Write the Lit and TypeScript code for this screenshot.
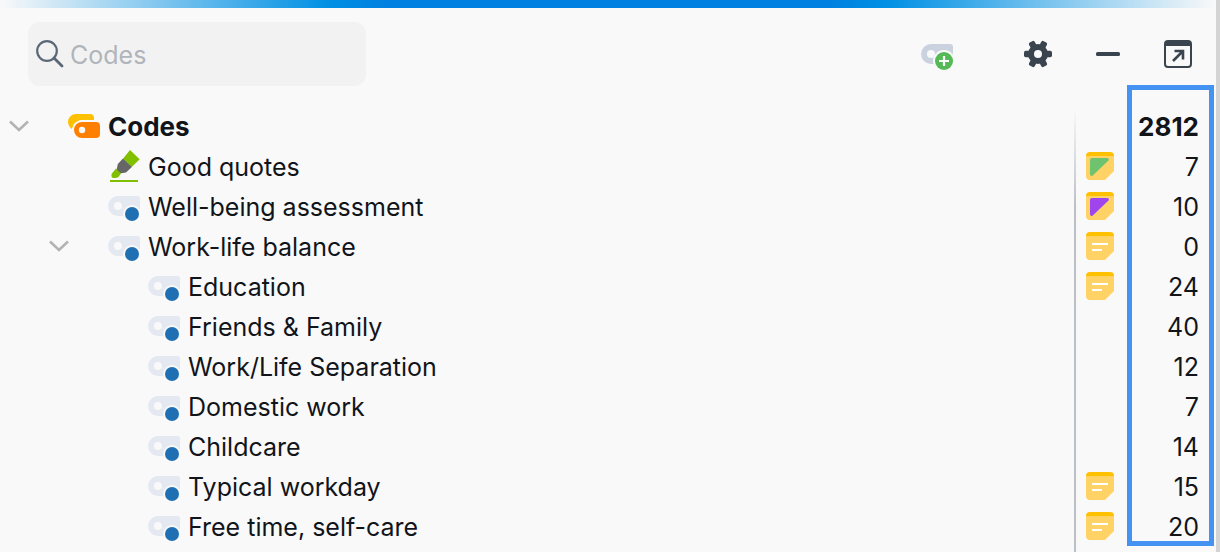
import { LitElement, html, svg, css, nothing } from "lit";
import { customElement, state } from "lit/decorators.js";
import { styleMap } from "lit/directives/style-map.js";

type IconKind = "root" | "marker" | "code";
type Memo = "green" | "purple" | "text";

interface CodeRow {
  name: string;
  count: number;
  depth: number;
  icon: IconKind;
  memo?: Memo;
  parent?: boolean;
}

const ROWS: CodeRow[] = [
  { name: "Codes", count: 2812, depth: 0, icon: "root", parent: true },
  { name: "Good quotes", count: 7, depth: 1, icon: "marker", memo: "green" },
  { name: "Well-being assessment", count: 10, depth: 1, icon: "code", memo: "purple" },
  { name: "Work-life balance", count: 0, depth: 1, icon: "code", memo: "text", parent: true },
  { name: "Education", count: 24, depth: 2, icon: "code", memo: "text" },
  { name: "Friends & Family", count: 40, depth: 2, icon: "code" },
  { name: "Work/Life Separation", count: 12, depth: 2, icon: "code" },
  { name: "Domestic work", count: 7, depth: 2, icon: "code" },
  { name: "Childcare", count: 14, depth: 2, icon: "code" },
  { name: "Typical workday", count: 15, depth: 2, icon: "code", memo: "text" },
  { name: "Free time, self-care", count: 20, depth: 2, icon: "code", memo: "text" },
];

const TAG = "M10 0H29a3 3 0 0 1 3 3V17a3 3 0 0 1-3 3H10A10 10 0 0 1 10 0Z";

const codeIcon = (kind: IconKind) => {
  if (kind === "root") {
    return svg`
      <path d="M8 4H22a4 4 0 0 1 4 4V10H12L4 19A9 9 0 0 1 0 12 8 8 0 0 1 8 4Z" fill="#ffc000"/>
      <path d="M14 10H28V14H14A7 7 0 0 0 6 20V24H4V19A10 10 0 0 1 14 10Z" fill="#f9f9f9"/>
      <path d="M14 12H28a4 4 0 0 1 4 4V24a4 4 0 0 1-4 4H14A8 8 0 0 1 14 12Z" fill="#ff8000"/>
      <circle cx="14" cy="20" r="3.200" fill="#f9f9f9"/>`;
  }
  if (kind === "marker") {
    return svg`
      <path d="M22 0 31.700 9.300 23.700 17 15 8.700Z" fill="#80c000"/>
      <path d="M15 8.500 23.900 17 18 22.500 11.500 23.500 8.500 20.500 9.800 14Z" fill="#666"/>
      <path d="M8 18.500 13 23.500 10.500 27 8 28H4.700L3.500 26.500V24Z" fill="#80c000"/>
      <path d="M2 30H30V32H2Z" fill="#80c000"/>`;
  }
  return svg`
    <g transform="translate(0 6)">
      <path d=${TAG} fill="#e3e8f1"/>
      <circle cx="10" cy="10" r="4" fill="#f9f9f9"/>
      <circle cx="24" cy="18" r="9" fill="#f9f9f9"/>
      <circle cx="24" cy="18" r="7" fill="#1f70b2"/>
    </g>`;
};

const memoIcon = (memo: Memo) => html`
  <svg width="28" height="30" viewBox="0 0 28 30" role="img" aria-label="Memo">
    <path d="M0 3H28V19L19 28H4a4 4 0 0 1-4-4Z" fill="#ffd266"/>
    <path d="M0 4a4 4 0 0 1 4-4H24a4 4 0 0 1 4 4Z" fill="#ffc000"/>
    ${memo === "text"
      ? svg`<path d="M6 12H22M6 18H16" stroke="#fff" stroke-width="2"/>`
      : svg`<path d="M6 6H21.500a1.500 1.500 0 0 1 1 2.500L7 23.300A1.700 1.700 0 0 1 4 22V8a2 2 0 0 1 2-2Z"
          fill=${memo === "green" ? "#6fc36f" : "#a044ee"}/>`}
  </svg>`;

@customElement("app-root")
export class AppRoot extends LitElement {
  static styles = css`
    :host {
      display: block;
      font-family: Inter, "Liberation Sans", sans-serif;
      font-size: 25px;
      line-height: 40px;
      color: #11151a;
    }
    * { box-sizing: border-box; }
    svg { display: block; flex: none; }
    button {
      display: grid;
      place-items: center;
      padding: 0;
      border: 0;
      background: none;
      color: inherit;
      font: inherit;
      cursor: pointer;
    }
    .panel {
      display: flex;
      flex-direction: column;
      min-height: 100vh;
      background: #f9f9f9;
      border-right: 4px solid #d4d4d4;
    }
    .accent {
      height: 8px;
      background: linear-gradient(90deg, #f9f9f9, #0090e4 27%, #0080e0 32%, #0080e0 68%, #0090e4 73%, #f9f9f9);
    }
    .toolbar {
      display: flex;
      align-items: center;
      justify-content: space-between;
      padding: 14px 22px 0 28px;
    }
    .search {
      display: flex;
      align-items: center;
      gap: 6px;
      width: 338px;
      height: 64px;
      padding: 0 8px;
      border-radius: 12px;
      background: #f2f2f2;
    }
    .search input {
      flex: 1;
      min-width: 0;
      padding: 2px 0 0;
      border: 0;
      outline: 0;
      background: none;
      color: inherit;
      font: inherit;
    }
    .search input::placeholder { color: #afb5ba; opacity: 1; }
    .actions {
      display: flex;
      align-items: center;
      gap: 38px;
      color: #3a444e;
    }
    .add { margin-right: 30px; }
    .tree {
      flex: 1;
      margin-top: 21px;
      background: linear-gradient(#f9f9f9, #bbc0c5 100px) right 140px top / 2px 100% no-repeat;
    }
    .rows { position: relative; }
    .row {
      display: flex;
      align-items: center;
      height: 40px;
      padding-right: 17px;
    }
    .root { font-size: 26px; font-weight: 700; }
    .toggle {
      flex: none;
      width: 38px;
      height: 40px;
      margin-right: 30px;
    }
    .label {
      flex: 1;
      min-width: 0;
      margin-left: 8px;
      white-space: nowrap;
    }
    .memo { width: 28px; }
    .count { width: 85px; text-align: right; }
    .outline {
      position: absolute;
      top: -22px;
      right: 2px;
      bottom: 1px;
      width: 87px;
      border: 5px solid #4493f2;
      pointer-events: none;
    }
  `;

  @state() private closed = new Set<string>();
  @state() private query = "";

  private toggle(name: string) {
    const next = new Set(this.closed);
    if (!next.delete(name)) next.add(name);
    this.closed = next;
  }

  private visibleRows() {
    let hiddenBelow = Infinity;
    return ROWS.filter((row) => {
      if (row.depth > hiddenBelow) return false;
      hiddenBelow = this.closed.has(row.name) ? row.depth : Infinity;
      return row.name.toLowerCase().includes(this.query.toLowerCase());
    });
  }

  private renderRow(row: CodeRow) {
    const open = !this.closed.has(row.name);
    return html`
      <div
        class="row ${row.icon === "root" ? "root" : ""}"
        role="row"
        aria-level=${row.depth + 1}
        style=${styleMap({ paddingLeft: `${row.depth * 40}px` })}
      >
        ${row.parent
          ? html`<button class="toggle" aria-label="Toggle ${row.name}" aria-expanded=${open} @click=${() => this.toggle(row.name)}>
              <svg width="20" height="14" viewBox="0 0 20 14">
                <path d="M1 1.500 10 10 19 1.500" fill="none" stroke="#b3b3b3" stroke-width="2.600"/>
              </svg>
            </button>`
          : html`<span class="toggle"></span>`}
        <svg width="32" height="40" viewBox="0 -3 32 40" aria-hidden="true">${codeIcon(row.icon)}</svg>
        <span class="label" role="gridcell">${row.name}</span>
        <span class="memo" role="gridcell">${row.memo ? memoIcon(row.memo) : nothing}</span>
        <span class="count" role="gridcell">${row.count}</span>
      </div>`;
  }

  render() {
    return html`
      <main class="panel">
        <div class="accent"></div>
        <header class="toolbar">
          <label class="search">
            <svg width="28" height="28" viewBox="0 0 28 28" fill="none" stroke="#5a6877" stroke-width="2.200" stroke-linecap="round" aria-hidden="true">
              <circle cx="11" cy="11" r="9.800"/>
              <path d="M18 18 26 26" stroke-width="2.800"/>
            </svg>
            <input
              type="text"
              placeholder="Codes"
              aria-label="Search codes"
              .value=${this.query}
              @input=${(e: Event) => (this.query = (e.target as HTMLInputElement).value)}
            />
          </label>
          <div class="actions">
            <button class="add" aria-label="New code">
              <svg width="34" height="34" viewBox="-1 -6 34 34">
                <path d=${TAG} transform="translate(0 1)" fill="#cbd2df"/>
                <circle cx="10" cy="11" r="4" fill="#f9f9f9"/>
                <circle cx="23" cy="18" r="11" fill="#f9f9f9"/>
                <circle cx="23" cy="18" r="9" fill="#55b955"/>
                <path d="M23 13V23M18 18H28" stroke="#fff" stroke-width="2.200"/>
              </svg>
            </button>
            <button aria-label="Settings">
              <svg width="32" height="32" viewBox="-16 -16 32 32">
                <g fill="currentColor">
                  <circle r="10"/>
                  ${[0, 60, 120].map((a) => svg`<rect x="-14" y="-3.200" width="28" height="6.400" rx="1.800" transform="rotate(${a})"/>`)}
                </g>
                <circle r="4" fill="#f9f9f9"/>
              </svg>
            </button>
            <button aria-label="Minimize">
              <svg width="32" height="32" viewBox="0 0 32 32">
                <rect x="4" y="14" width="24" height="4" rx="1.500" fill="currentColor"/>
              </svg>
            </button>
            <button aria-label="Open in new window">
              <svg width="32" height="32" viewBox="0 0 32 32">
                <rect x="3" y="3" width="26" height="26" rx="3" fill="none" stroke="currentColor" stroke-width="2"/>
                <path d="M3 3H29V8H3Z" fill="currentColor"/>
                <path d="M11 23 20.500 13.500M12.500 13H21V21.500" fill="none" stroke="currentColor" stroke-width="2.600"/>
              </svg>
            </button>
          </div>
        </header>
        <section class="tree">
          <div class="rows" role="treegrid" aria-label="Codes">
            ${this.visibleRows().map((row) => this.renderRow(row))}
            <div class="outline"></div>
          </div>
        </section>
      </main>`;
  }
}
